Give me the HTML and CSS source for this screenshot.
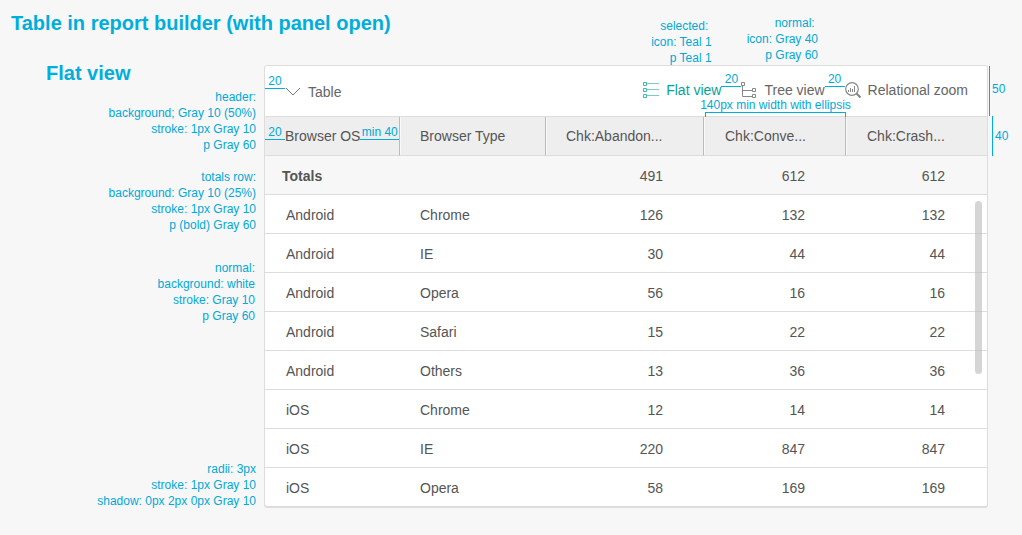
FILE: index.html
```html
<!DOCTYPE html>
<html lang="en">
<head>
<meta charset="utf-8">
<title>Table in report builder</title>
<link rel="stylesheet" href="styles.css">
</head>
<body>
<main class="spec">
  <div class="spec-notes">
    <h1 class="title">Table in report builder (with panel open)</h1>
    <h2 class="subtitle">Flat view</h2>
    <p class="note note-header">header:<br>background; Gray 10 (50%)<br>stroke: 1px Gray 10<br>p Gray 60</p>
    <p class="note note-totals">totals row:<br>background: Gray 10 (25%)<br>stroke: 1px Gray 10<br>p (bold) Gray 60</p>
    <p class="note note-normal">normal:<br>background: white<br>stroke: Gray 10<br>p Gray 60</p>
    <p class="note note-frame">radii: 3px<br>stroke: 1px Gray 10<br>shadow: 0px 2px 0px Gray 10</p>
  </div>

  <div class="spec-main">
    <div class="top-notes">
      <p class="note note-selected">selected:&nbsp;<br>icon: Teal 1<br>p Teal 1</p>
      <p class="note note-unselected">normal:&nbsp;<br>icon: Gray 40<br>p Gray 60</p>
    </div>

    <section class="panel">
      <div class="toolbar">
        <span class="measure measure-toolbar">20</span>
        <button class="collapse" type="button">
          <svg class="chevron" width="16" height="10" viewBox="0 0 16 10" fill="none" stroke="#777"><path d="M1 1l7 7 7-7"/></svg>
          Table
        </button>
        <nav class="views">
          <button class="view view-selected" type="button">
            <svg class="icon" width="17" height="18" viewBox="0 0 17 18" fill="none" stroke="#3fb8ae"><path d="M.5 1.5h3v3h-3zM.5 7.5h3v3h-3zM.5 13.5h3v3h-3z"/><path d="M4 2.5h12M4 8.5h12M4 14.500h12" stroke="#7accc5"/></svg>
            Flat view
          </button>
          <span class="measure measure-view">20</span>
          <button class="view" type="button">
            <svg class="icon" width="17" height="18" viewBox="0 0 17 18" fill="none" stroke="#888"><path d="M.5 1.5h3v3h-3zM11.500 7.5h3v3h-3zM11.500 13.5h3v3h-3zM1.500 5v10.500h10M1.500 9.500h10"/></svg>
            Tree view
          </button>
          <span class="measure measure-view">20</span>
          <button class="view" type="button">
            <svg class="icon" width="17" height="18" viewBox="0 0 17 18" fill="none" stroke="#888"><circle cx="7" cy="8" r="6.300" stroke-width="1.200"/><path d="M3.500 9v2M5.500 7v4M7.500 8v3M9.500 5v6"/><path d="M11.500 12.500l4 4" stroke-width="2.200"/></svg>
            Relational zoom
          </button>
        </nav>
        <span class="bracket">140px min width with ellipsis</span>
      </div>

      <div class="table-wrap">
        <table class="grid">
          <colgroup><col class="col-os"><col class="col-type"><col class="col-abandon"><col class="col-conversion"><col></colgroup>
          <thead>
            <tr>
              <th class="measured"><div class="measured-row"><span class="measure measure-cell">20</span>Browser OS<span class="measure measure-rest">min 40</span></div></th>
              <th>Browser Type</th><th>Chk:Abandon...</th><th>Chk:Conve...</th><th>Chk:Crash...</th>
            </tr>
          </thead>
          <tbody>
            <tr class="totals"><td>Totals</td><td></td><td>491</td><td>612</td><td>612</td></tr>
            <tr><td>Android</td><td>Chrome</td><td>126</td><td>132</td><td>132</td></tr>
            <tr><td>Android</td><td>IE</td><td>30</td><td>44</td><td>44</td></tr>
            <tr><td>Android</td><td>Opera</td><td>56</td><td>16</td><td>16</td></tr>
            <tr><td>Android</td><td>Safari</td><td>15</td><td>22</td><td>22</td></tr>
            <tr><td>Android</td><td>Others</td><td>13</td><td>36</td><td>36</td></tr>
            <tr><td>iOS</td><td>Chrome</td><td>12</td><td>14</td><td>14</td></tr>
            <tr><td>iOS</td><td>IE</td><td>220</td><td>847</td><td>847</td></tr>
            <tr><td>iOS</td><td>Opera</td><td>58</td><td>169</td><td>169</td></tr>
          </tbody>
        </table>
        <div class="scroll-thumb"></div>
      </div>
    </section>
  </div>

  <div class="heights">
    <span class="height height-toolbar">50</span>
    <span class="height height-header">40</span>
  </div>
</main>
</body>
</html>
```

FILE: styles.css
```css
* { box-sizing: border-box; }

body {
  margin: 0;
  background: #f7f7f7;
  color: #555;
  font: 14px/20px "Liberation Sans", Arial, sans-serif;
}

h1, h2, p { margin: 0; }

.spec {
  display: grid;
  grid-template-columns: 256px minmax(0, 1fr) 34px;
}

/* Annotations */
.spec-notes { padding-top: 11px; }

.title, .subtitle {
  color: #00aedb;
  font-size: 20px;
  line-height: 24px;
  white-space: nowrap;
}

.title { margin-left: 11px; }
.subtitle { margin: 26px 0 0 46px; }

.note {
  color: #00a9d8;
  font-size: 12px;
  line-height: 16px;
  text-align: right;
  white-space: nowrap;
}

.note-header { margin-top: 4px; }
.note-totals { margin-top: 16px; }
.note-normal { margin-top: 27px; padding-right: 1px; }
.note-frame { margin-top: 137px; }

.spec-main { padding-left: 8px; }

.top-notes {
  display: flex;
  justify-content: flex-end;
  gap: 35px;
  height: 65px;
  padding: 15px 170px 0 0;
}

.note-selected { margin-top: 3px; }

.measure {
  flex: none;
  width: 20px;
  border-bottom: 1px solid #00aedb;
  color: #00a9d8;
  font-size: 12px;
  line-height: 14px;
  text-align: center;
}

.measure-toolbar { margin-bottom: 19px; }
.measure-view { margin-bottom: 21px; }
.measure-cell { margin-bottom: 8px; }

.measure-rest {
  flex: 1;
  margin-bottom: 8px;
}

.bracket {
  position: absolute;
  right: 141px;
  bottom: -2px;
  display: flex;
  align-items: flex-end;
  justify-content: center;
  width: 141px;
  height: 6px;
  padding-bottom: 5px;
  border: 1px solid #00aedb;
  border-bottom: 0;
  color: #00a9d8;
  font-size: 12px;
  line-height: 16px;
  white-space: nowrap;
}

.heights { padding-top: 66px; }

.height {
  display: flex;
  align-items: center;
  border-left: 1px solid #00aedb;
  padding-left: 2px;
  color: #00a9d8;
  font-size: 12px;
}

.height-toolbar {
  height: 50px;
  margin-left: 1px;
  padding-bottom: 4px;
}

.height-header {
  height: 40px;
  margin-left: 4px;
}

/* Panel */
.panel {
  border: 1px solid #ddd;
  border-radius: 3px;
  background: #fff;
  box-shadow: 0 1px 0 #ddd;
}

.toolbar {
  position: relative;
  display: flex;
  align-items: center;
  height: 51px;
  padding-right: 19px;
  border-bottom: 1px solid #ddd;
}

.collapse, .view {
  display: flex;
  align-items: center;
  padding: 0;
  border: 0;
  background: none;
  color: #666;
  font: inherit;
  white-space: nowrap;
}

.collapse { gap: 7px; padding-top: 2px; }

.views {
  display: flex;
  align-items: center;
  margin: 0 0 2px auto;
}

.view { gap: 6px; }
.view-selected { color: #00a499; }

/* Data grid */
.table-wrap { position: relative; }

.grid {
  width: 100%;
  table-layout: fixed;
  border-collapse: separate;
  border-spacing: 0;
}

.col-os { width: 135px; }
.col-type { width: 146px; }
.col-abandon { width: 158px; }
.col-conversion { width: 142px; }

.grid th, .grid td {
  height: 39px;
  padding: 0 0 0 20px;
  border-bottom: 1px solid #ddd;
  text-align: left;
  white-space: nowrap;
}

.grid th {
  background: #eee;
  border-right: 1px solid #bbb;
  font-weight: normal;
}

.grid th + th { box-shadow: inset 1px 0 0 #f8f8f8; }
.grid th:nth-child(n+4) { padding-left: 21px; }
.grid th:last-child { border-right: 0; }
.grid .measured { padding: 0; }

.measured-row {
  display: flex;
  align-items: center;
}

.grid td { padding-top: 2px; }
.grid td:first-child { padding-left: 21px; }

.grid td:nth-child(n+3) {
  padding-left: 0;
  padding-right: 41px;
  text-align: right;
}

.grid td:last-child { padding-right: 43px; }

.grid tr:last-child td {
  height: 38px;
  border-bottom: 0;
}

.grid .totals td { background: #f7f7f7; }

.grid .totals td:first-child {
  padding-left: 17px;
  font-weight: bold;
}

.grid td:nth-child(n+3):last-child { padding-right: 42px; }

.scroll-thumb {
  position: absolute;
  top: 84px;
  right: 5px;
  width: 7px;
  height: 173px;
  border-radius: 4px;
  background: rgba(190, 190, 190, 0.65);
}
```
